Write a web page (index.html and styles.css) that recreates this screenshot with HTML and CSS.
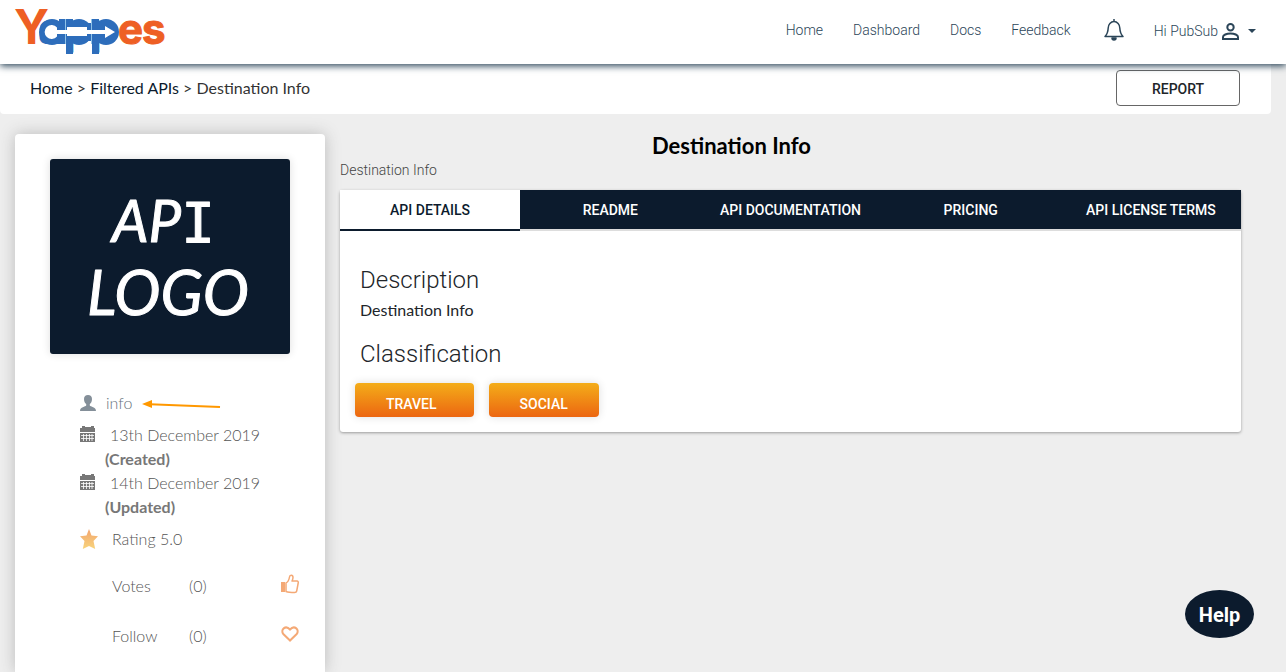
FILE: index.html
```html
<!DOCTYPE html>
<html lang="en">
<head>
<meta charset="utf-8">
<title>Yappes - Destination Info</title>
<link rel="stylesheet" href="styles.css">
</head>
<body>
<header class="topbar">
  <a class="brand" href="#" aria-label="Yappes">
    <svg width="152" height="48" viewBox="0 0 152 48" aria-hidden="true">
      <g class="brand-word">
        <text class="brand-orange brand-cap" x="0" y="37">Y</text>
        <text class="brand-blue" x="24 50 76" y="37">app</text>
        <text class="brand-orange brand-end" x="104 128" y="37">es</text>
      </g>
      <g fill="#2d6dbb">
        <circle cx="38" cy="25" r="13"/><circle cx="65" cy="25" r="13"/><circle cx="92" cy="25" r="13"/>
        <path d="M38 16H92V34H38ZM45 12h14V47h-7V37h-7ZM78 12h7V47h-7Z"/>
      </g>
      <path d="M43 20.500A7 7 0 1 0 43 29.500V27H53V29H73V27H91V31L101 25L91 19V23H73V20H53V23H43Z" fill="#fff"/>
      <path d="M51.500 12V23M51.500 27V37M77.500 12V23M77.500 27V37" stroke="#8fc3e8" fill="none"/>
    </svg>
  </a>
  <nav class="menu">
    <a href="#">Home</a>
    <a href="#">Dashboard</a>
    <a href="#">Docs</a>
    <a href="#">Feedback</a>
    <button class="icon-button" aria-label="Notifications">
      <svg width="20" height="22" viewBox="0 0 20 22" fill="none" stroke="#2b4558" stroke-width="1.5" stroke-linejoin="round"><path d="M10 0v2M1 17.500C3.500 15 4 13 4.200 9a5.800 6.500 0 0 1 11.600 0c.2 4 .7 6 3.200 8.500z"/><path d="M8 19h4a2 2 0 0 1-4 0z" fill="#2b4558"/></svg>
    </button>
    <button class="user-button">
      <span>Hi PubSub</span>
      <svg width="17" height="17" viewBox="0 0 17 17" fill="none" stroke="#2b4558" stroke-width="2"><circle cx="8.500" cy="4.200" r="3.200"/><path d="M1 16v-2c0-2 3.500-3.500 7.500-3.500S16 12 16 14v2z"/></svg>
      <svg width="8" height="4" viewBox="0 0 8 4"><path d="M0 0h8L4 4z" fill="#2b4558"/></svg>
    </button>
  </nav>
</header>
<section class="crumbs">
  <nav class="trail"><a href="#">Home</a> &gt; <a href="#">Filtered APIs</a> &gt; <span>Destination Info</span></nav>
  <button class="report">REPORT</button>
</section>
<main class="page">
  <aside class="card">
    <svg class="api-logo" viewBox="0 0 240 195" role="img" aria-label="API LOGO">
      <text x="62" y="83">AP<tspan class="serif-i">I</tspan></text>
      <text class="second-line" x="37" y="156">LOGO</text>
    </svg>
    <div class="facts">
      <div class="fact owner">
        <svg width="16" height="16" viewBox="0 0 16 16" fill="#848f99"><path d="M8 0C5.500 0 4 1.600 4 4c0 2.500 1 4.200 2.200 5v1.500C5.500 12 0 11.500 0 16h16c0-4.500-5.500-4-6.200-5.500V9C11 8.200 12 6.500 12 4c0-2.400-1.500-4-4-4z"/></svg>
        <a href="#">info</a>
        <svg class="pointer" width="78" height="10" viewBox="0 0 78 10"><path d="M8 4.300L78 7" stroke="#ff9800" stroke-width="2"/><path d="M0 4L10 0V8Z" fill="#ff9800"/></svg>
      </div>
      <div class="fact dated">
        <svg width="16" height="16" viewBox="0 0 16 16"><path d="M0 2h2V0h3v1h6V0h3v2h1v4H0zM0 7h15v9H0z" fill="#777"/><path d="M1 9.500h13M1 12.500h13M3.500 8v7M6.500 8v7M9.500 8v7M12 8v7" stroke="#fff" stroke-width=".8"/></svg>
        <p><span class="date">13th December 2019</span><b>(Created)</b></p>
      </div>
      <div class="fact dated">
        <svg width="16" height="16" viewBox="0 0 16 16"><path d="M0 2h2V0h3v1h6V0h3v2h1v4H0zM0 7h15v9H0z" fill="#777"/><path d="M1 9.500h13M1 12.500h13M3.500 8v7M6.500 8v7M9.500 8v7M12 8v7" stroke="#fff" stroke-width=".8"/></svg>
        <p><span class="date">14th December 2019</span><b>(Updated)</b></p>
      </div>
      <div class="fact rating">
        <svg width="18" height="20" viewBox="0 0 18 20"><defs><linearGradient id="gold" x2="0" y2="1"><stop stop-color="#f2a56f"/><stop offset="1" stop-color="#f8d47c"/></linearGradient></defs><path d="M9 0l2.500 6.500 6.500.8-4.500 4.700 1.700 8L9 17l-6.200 3L4.500 12 0 7.300l6.500-.8z" fill="url(#gold)"/></svg>
        <span>Rating 5.0</span>
      </div>
      <div class="fact tally">
        <span class="tally-name">Votes</span><span>(0)</span>
        <button class="icon-button" aria-label="Vote"><svg width="18" height="20" viewBox="0 0 18 20" fill="none" stroke="#f4a976" stroke-width="1.500" stroke-linejoin="round"><path d="M5 9c2-1 3-3 3.500-6 .2-2.500 3.500-2.500 3.500.5 0 1.500-.5 2.500-1 3.500h5c1 0 1.500 1 1.200 2l-1.500 8c-.2 1-1 1.500-2 1.500-4 0-6 0-8.700-1z"/><path d="M0 8h4v10H0z" fill="#f4a976" stroke="none"/></svg></button>
      </div>
      <div class="fact tally">
        <span class="tally-name">Follow</span><span>(0)</span>
        <button class="icon-button" aria-label="Follow"><svg width="18" height="16" viewBox="0 0 18 16" fill="none" stroke="#f4a976" stroke-width="2" stroke-linejoin="miter"><path d="M9 14.500L2.300 8C-1 4 4.500-1.500 9 3.500c4.500-5 10 .5 6.700 4.500z"/></svg></button>
      </div>
    </div>
  </aside>
  <section class="detail">
    <h1>Destination Info</h1>
    <p class="summary">Destination Info</p>
    <div class="panel">
      <div class="tabs" role="tablist">
        <button class="tab active" role="tab" aria-selected="true">API DETAILS</button>
        <button class="tab" role="tab">README</button>
        <button class="tab" role="tab">API DOCUMENTATION</button>
        <button class="tab" role="tab">PRICING</button>
        <button class="tab" role="tab">API LICENSE TERMS</button>
      </div>
      <div class="content">
        <h2>Description</h2>
        <p class="description">Destination Info</p>
        <h2>Classification</h2>
        <div class="tags">
          <button class="tag tag-wide">TRAVEL</button>
          <button class="tag">SOCIAL</button>
        </div>
      </div>
    </div>
  </section>
</main>
<button class="help">Help</button>
</body>
</html>
```
FILE: styles.css
```css
* { box-sizing: border-box; }
body {
  margin: 0;
  height: 100vh;
  display: flex;
  flex-direction: column;
  background: #eee;
  color: #212529;
  font: 300 14px/20px Roboto, sans-serif;
}
a { color: inherit; text-decoration: none; }
button { font: inherit; color: inherit; border: 0; background: none; padding: 0; cursor: pointer; }
h1, h2, p { margin: 0; }
svg { display: block; flex: none; overflow: visible; }

.topbar {
  position: relative;
  z-index: 1;
  display: flex;
  justify-content: space-between;
  flex: none;
  height: 64px;
  padding: 7px 30px 0 14px;
  background: #fff;
  box-shadow: 0 2px 7px #2b4558;
}
.brand-word { font: 700 44px Inter, sans-serif; }
.brand-cap { font-size: 48px; }
.brand-end { font-size: 42px; stroke: #ee5f24; stroke-width: 1px; }
.brand-orange { fill: #ee5f24; }
.brand-blue { fill: #2d6dbb; }
.menu { display: flex; align-items: center; align-self: flex-start; gap: 30px; height: 46px; color: #2b4558; }
.icon-button { display: flex; }
.menu .icon-button { margin-left: 3px; }
.user-button { display: flex; align-items: center; gap: 4px; padding-top: 2px; }
.user-button svg:last-child { margin-left: 5px; }

.crumbs {
  display: flex;
  justify-content: space-between;
  flex: none;
  height: 50px;
  margin-right: 15px;
  padding: 6px 31px 0 30px;
  background: #fff;
  border-radius: 0 0 4px 4px;
}
.trail { font: 400 16px/36px Lato, sans-serif; color: #333; }
.trail a { color: #0c1b2d; }
.report { width: 124px; height: 36px; padding-top: 2px; border: 1px solid #666; border-radius: 4px; font-weight: 500; }

.page { display: flex; flex: 1; gap: 15px; padding: 20px 45px 0 15px; }
.card {
  flex: none;
  width: 310px;
  padding: 25px 25px 0 35px;
  background: #fff;
  border-radius: 4px 4px 0 0;
  box-shadow: 0 0 16px #bbb;
}
.api-logo { width: 240px; background: #0c1b2d; border-radius: 3px; box-shadow: 0 0 8px #ddd; }
.api-logo text { font: italic 400 58px Lato, sans-serif; fill: #fff; stroke: #fff; stroke-width: 1px; stroke-linejoin: round; }
.api-logo .serif-i { font: 400 56px "DejaVu Sans Mono", monospace; }
.api-logo .second-line { font-size: 62px; }
.facts { padding: 36px 0 0 30px; font: 300 16px/24px Lato, sans-serif; color: #555; }
.fact { display: flex; }
.owner { align-items: center; gap: 10px; height: 26px; margin-bottom: 7px; color: #67727d; }
.pointer { margin-top: 4px; }
.dated { gap: 9px; }
.dated svg { margin-top: 3px; }
.date { display: block; padding-left: 5px; }
.facts b { font-weight: 700; color: #777; }
.rating { align-items: center; gap: 14px; padding-top: 8px; margin-bottom: 10px; }
.tally { align-items: center; height: 50px; padding-left: 32px; }
.tally-name { width: 77px; }
.tally .icon-button { margin: 0 1px 5px auto; }

.detail { flex: 1; min-width: 0; }
h1 { text-align: center; padding-right: 118px; font: 700 22px/24px Lato, sans-serif; color: #000; }
.summary { line-height: 24px; margin-bottom: 8px; color: #444; }
.panel { background: #fff; border-radius: 3px; box-shadow: 0 1px 3px #999; }
.tabs { display: flex; height: 41px; border-bottom: 2px solid #ddd; background: #0c1b2d; color: #fff; }
.tab { flex: 1; font-weight: 500; white-space: nowrap; }
.tab.active { height: 41px; background: #fff; color: #0c1b2d; border-bottom: 2px solid #0c1b2d; }
.content { padding: 34px 20px 15px; }
h2 { font: 300 24px/30px Roboto, sans-serif; }
.description { font: 400 16px/30px Lato, sans-serif; margin-bottom: 14px; }
.tags { display: flex; gap: 15px; margin: 14px 0 0 -5px; }
.tag {
  height: 34px;
  padding: 7px 31px 0;
  border-radius: 4px;
  color: #fff;
  background: linear-gradient(#f4ad19, #ec6611);
  box-shadow: 0 0 8px #ddd;
  font-weight: 500;
}
.tag-wide { padding-right: 37px; }

.help {
  position: fixed;
  right: 32px;
  bottom: 34px;
  width: 69px;
  height: 48px;
  padding-top: 2px;
  border-radius: 50%;
  background: #0c1b2d;
  color: #fff;
  font-weight: 700;
  font-size: 20px;
}
```
